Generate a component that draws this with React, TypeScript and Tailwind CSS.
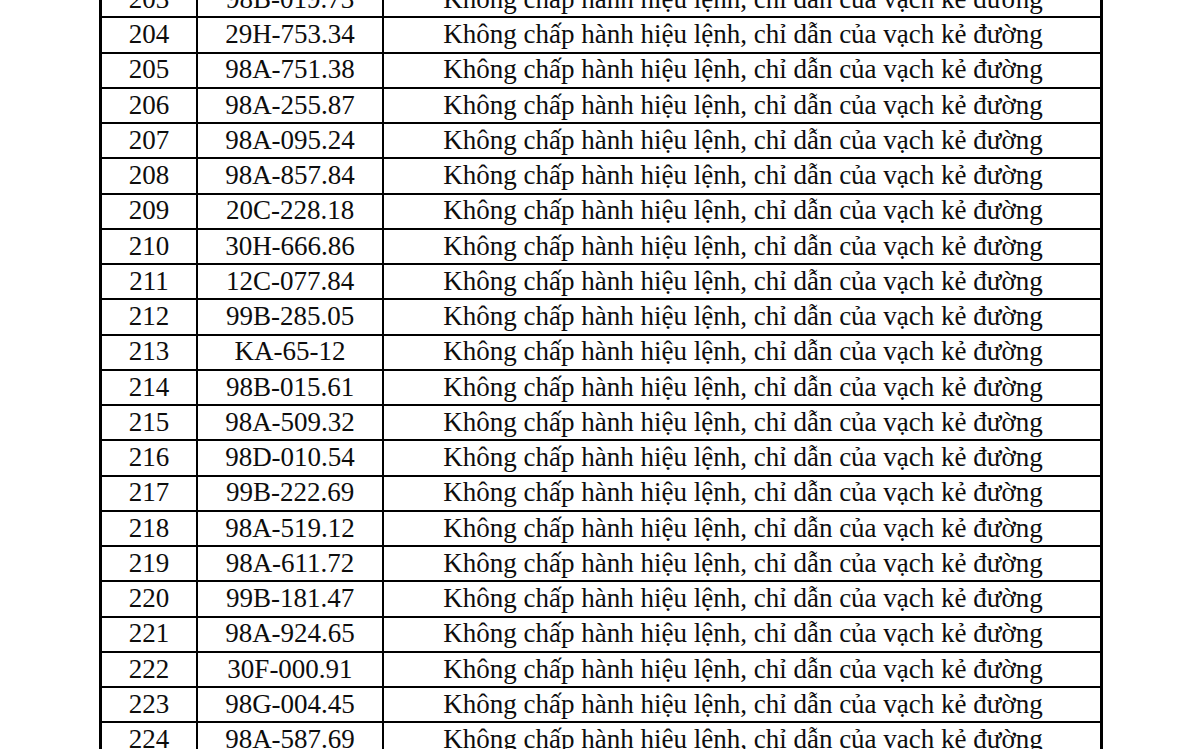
import React from "react";

const rows: [string, string][] = [
  ["203", "98B-019.73"],
  ["204", "29H-753.34"],
  ["205", "98A-751.38"],
  ["206", "98A-255.87"],
  ["207", "98A-095.24"],
  ["208", "98A-857.84"],
  ["209", "20C-228.18"],
  ["210", "30H-666.86"],
  ["211", "12C-077.84"],
  ["212", "99B-285.05"],
  ["213", "KA-65-12"],
  ["214", "98B-015.61"],
  ["215", "98A-509.32"],
  ["216", "98D-010.54"],
  ["217", "99B-222.69"],
  ["218", "98A-519.12"],
  ["219", "98A-611.72"],
  ["220", "99B-181.47"],
  ["221", "98A-924.65"],
  ["222", "30F-000.91"],
  ["223", "98G-004.45"],
  ["224", "98A-587.69"],
];

const TEXT = "Không chấp hành hiệu lệnh, chỉ dẫn của vạch kẻ đường";

export default function App() {
  return (
    <div className="w-[1200px] h-[749px] overflow-hidden bg-white">
      <div
        className="ml-[99px] mt-[-17px] w-[1004px] border-x-[3px] border-black text-[27px] text-[#0d0d0d]"
        style={{ fontFamily: '"Liberation Serif", "Times New Roman", serif' }}
      >
        {rows.map(([n, plate]) => (
          <div key={n} className="flex h-[35.25px] border-b-[2.5px] border-black">
            <div className="w-[96px] shrink-0 border-r-[2.5px] border-black flex items-center justify-center pb-[1px]">
              {n}
            </div>
            <div className="w-[186px] shrink-0 border-r-[2.5px] border-black flex items-center justify-center pb-[1px]">
              {plate}
            </div>
            <div className="flex-1 flex items-center justify-center whitespace-nowrap pb-[1px] pl-[2px]">
              {TEXT}
            </div>
          </div>
        ))}
      </div>
    </div>
  );
}
